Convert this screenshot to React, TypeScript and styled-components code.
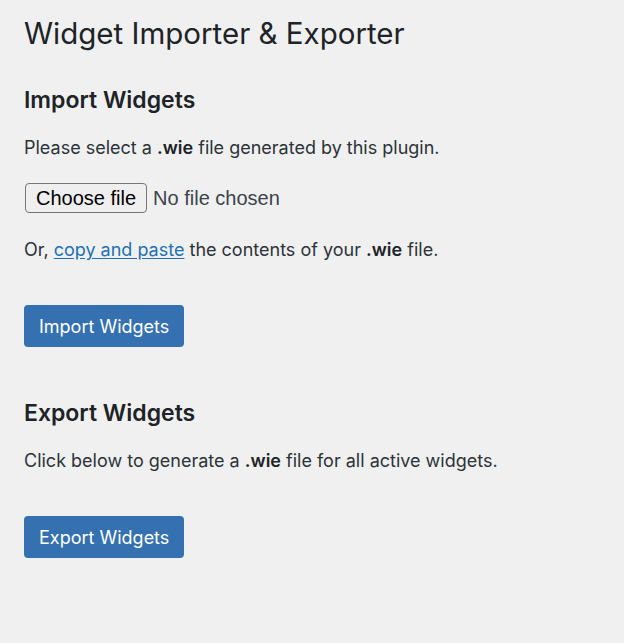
import styled, { createGlobalStyle } from "styled-components";

const GlobalStyle = createGlobalStyle`
  html, body {
    margin: 0;
    padding: 0;
    background: #f0f0f1;
  }
  body {
    font-family: Inter, "Noto Sans", sans-serif;
    color: #2c3338;
  }
`;

export default function App() {
  return (
    <>
      <GlobalStyle />
      <Wrap>
        <Title>Widget Importer &amp; Exporter</Title>

        <Section>
          <Heading>Import Widgets</Heading>
          <Text>
            Please select a <b>.wie</b> file generated by this plugin.
          </Text>
          <FileRow>
            <FileButton type="button">Choose file</FileButton>
            <FileName>No file chosen</FileName>
          </FileRow>
          <Text>
            Or, <Link href="#">copy and paste</Link> the contents of your{" "}
            <b>.wie</b> file.
          </Text>
          <PrimaryButton type="button">Import Widgets</PrimaryButton>
        </Section>

        <Section>
          <Heading>Export Widgets</Heading>
          <Text>
            Click below to generate a <b>.wie</b> file for all active widgets.
          </Text>
          <PrimaryButton type="button">Export Widgets</PrimaryButton>
        </Section>
      </Wrap>
    </>
  );
}

const Wrap = styled.div`
  padding: 14px 24px 40px;
  min-height: 643px;
  box-sizing: border-box;
`;

const Title = styled.h1`
  margin: 0;
  font-size: 29.5px;
  font-weight: 400;
  line-height: 39px;
  color: #1d2327;
`;

const Section = styled.section`
  display: flex;
  flex-direction: column;
  align-items: flex-start;
  margin-top: 33px;

  & + & {
    margin-top: 52px;
  }
`;

const Heading = styled.h2`
  margin: 0 0 20px;
  font-size: 23px;
  font-weight: 600;
  line-height: 29px;
  color: #1d2327;
`;

const Text = styled.p`
  margin: 0 0 22px;
  font-size: 18px;
  line-height: 26px;

  b {
    font-weight: 600;
    color: #1d2327;
  }
`;

const Link = styled.a`
  color: #2271b1;
  text-decoration: underline;
  text-underline-offset: 2px;
`;

const FileRow = styled.div`
  display: flex;
  align-items: center;
  gap: 6px;
  margin: 0 0 24px 1px;
`;

const FileButton = styled.button`
  font-family: "Liberation Sans", Arial, sans-serif;
  font-size: 20px;
  color: #000;
  background: #efefef;
  border: 1px solid #767676;
  border-radius: 4px;
  height: 30px;
  padding: 0 10px;
`;

const FileName = styled.span`
  font-family: "Liberation Sans", Arial, sans-serif;
  font-size: 20px;
  color: #3c434a;
`;

const PrimaryButton = styled.button`
  margin-top: 20px;
  height: 42px;
  padding: 0 15px;
  background: #3571b1;
  color: #fff;
  border: none;
  border-radius: 4px;
  font-family: Inter, "Noto Sans", sans-serif;
  font-size: 18px;
  cursor: pointer;
`;
